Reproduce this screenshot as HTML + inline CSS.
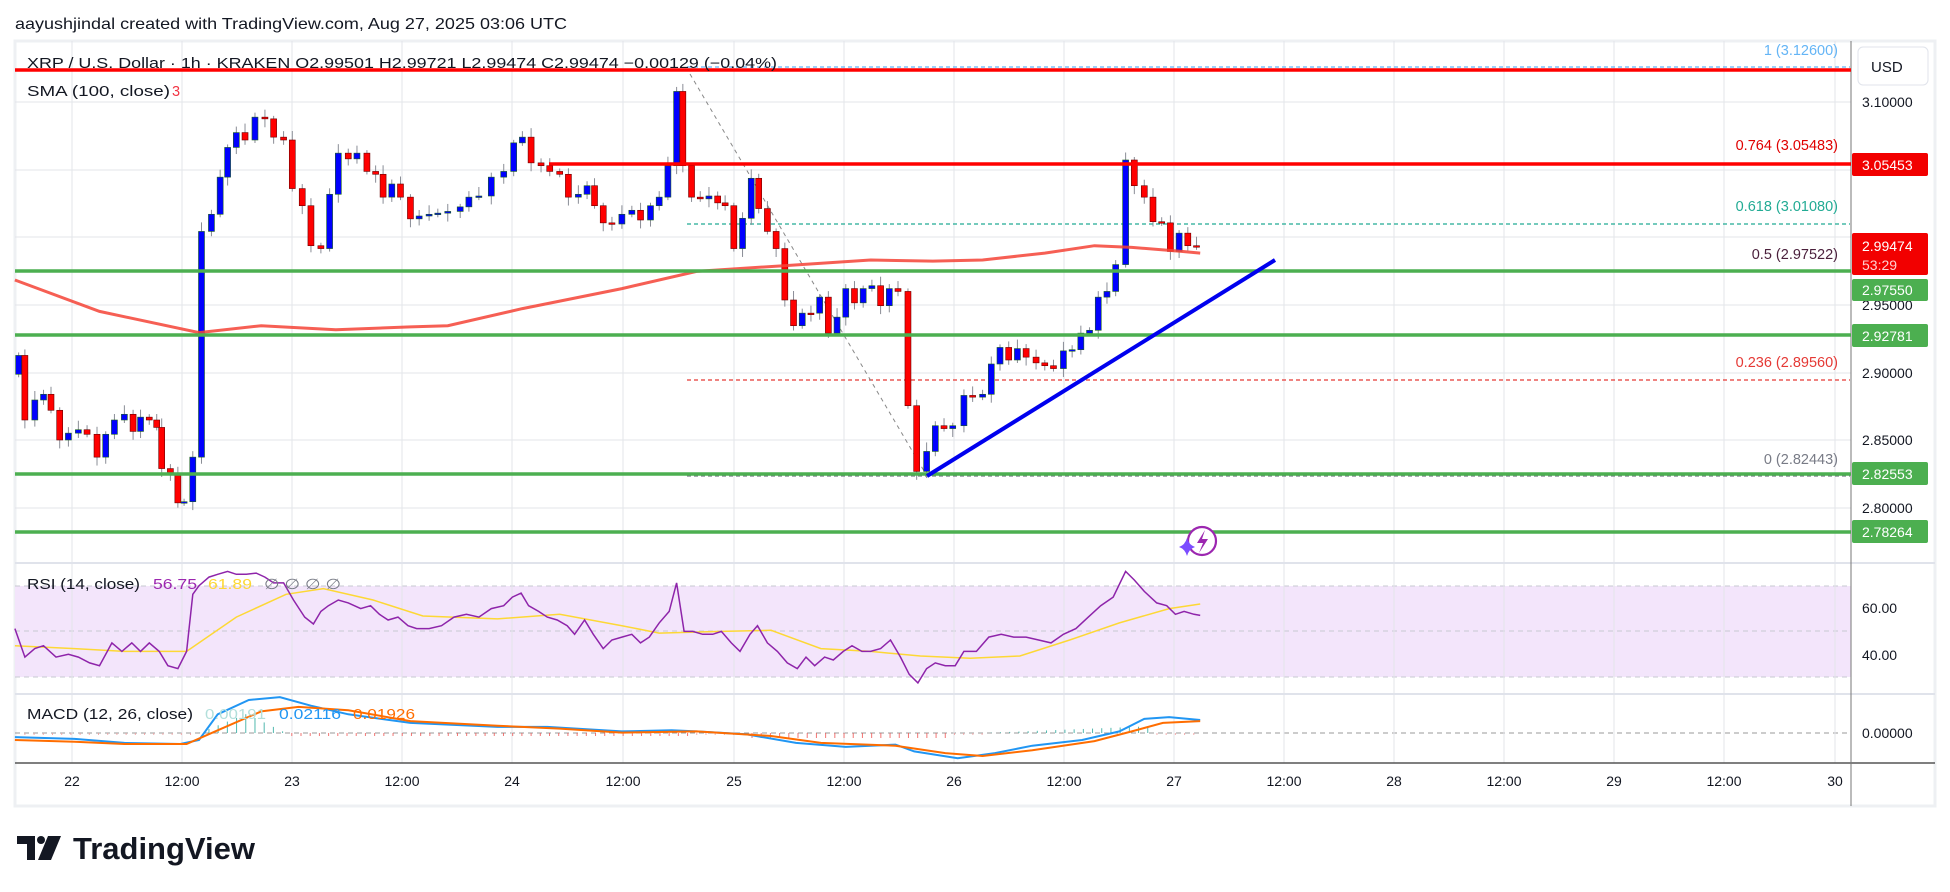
<!DOCTYPE html>
<html><head><meta charset="utf-8">
<style>
html,body{margin:0;padding:0;background:#fff;width:1950px;height:892px;overflow:hidden}
svg{display:block}
text{font-family:"Liberation Sans",sans-serif}
</style></head>
<body>
<svg id="s" width="1950" height="892" xmlns="http://www.w3.org/2000/svg">
<rect x="0" y="0" width="1950" height="892" fill="#fff"/>
<rect x="15" y="41" width="1920" height="765" fill="#fff" stroke="#eef0f3" stroke-width="3"/>
<g id="grid" stroke="#e3e5ea" stroke-width="1"></g>
<!-- RSI band -->
<rect x="15" y="586" width="1836" height="91" fill="#f3e5fb"/>
<g stroke="#c7c9d0" stroke-width="1" stroke-dasharray="5,4">
<line x1="15" y1="586" x2="1851" y2="586"/><line x1="15" y1="631" x2="1851" y2="631"/><line x1="15" y1="677" x2="1851" y2="677"/>
<line x1="15" y1="733" x2="1851" y2="733" stroke="#999"/>
</g>
<g id="vgrid" stroke="#e3e5ea" stroke-width="1"></g>
<!-- pane separators -->
<line x1="15" y1="563" x2="1935" y2="563" stroke="#e0e3eb" stroke-width="2"/>
<line x1="15" y1="694" x2="1935" y2="694" stroke="#e0e3eb" stroke-width="2"/>
<line x1="15" y1="763" x2="1935" y2="763" stroke="#555" stroke-width="1.5"/>
<line x1="1851" y1="41" x2="1851" y2="806" stroke="#777" stroke-width="1"/>
<!-- fib dashed -->
<g stroke-width="1.3" stroke-dasharray="4,3">
<line x1="687" y1="67" x2="1850" y2="67" stroke="#64b5f6"/>
<line x1="687" y1="224" x2="1850" y2="224" stroke="#22ab94"/>
<line x1="687" y1="380" x2="1850" y2="380" stroke="#e53935"/>
<line x1="687" y1="476" x2="1850" y2="476" stroke="#787b86"/>
</g>
<line x1="690" y1="74" x2="927" y2="476" stroke="#888" stroke-width="1" stroke-dasharray="4,4"/>
<g id="candles"></g>
<polyline id="sma" fill="none" stroke="#f44336" stroke-width="3" stroke-opacity="0.85"/>
<!-- levels -->
<line x1="15" y1="70" x2="1851" y2="70" stroke="#ff0000" stroke-width="3.5"/>
<line x1="549" y1="164" x2="1851" y2="164" stroke="#ff0000" stroke-width="3.5"/>
<g stroke="#4caf50" stroke-width="3.5">
<line x1="15" y1="271" x2="1851" y2="271"/><line x1="15" y1="335" x2="1851" y2="335"/>
<line x1="15" y1="474" x2="1851" y2="474"/><line x1="15" y1="532" x2="1851" y2="532"/>
</g>
<line x1="927" y1="476" x2="1275" y2="260" stroke="#0000ee" stroke-width="4"/>
<polyline id="rsima" fill="none" stroke="#fdd835" stroke-width="1.5"/>
<polyline id="rsi" fill="none" stroke="#8e24aa" stroke-width="1.5"/>
<g id="hist"></g>
<polyline id="macd" fill="none" stroke="#2196f3" stroke-width="2"/>
<polyline id="sig" fill="none" stroke="#ff6d00" stroke-width="2"/>
<!-- lightning icon -->
<circle cx="1202" cy="541" r="14" fill="#fff" stroke="#9c27b0" stroke-width="2.2"/>
<path d="M1205 530 L1197 543 H1203 L1199 553 L1208 539 H1202 Z" fill="#9c27b0"/>
<path d="M1187 538 Q1189 545 1195 547 Q1189 549 1187 556 Q1185 549 1179 547 Q1185 545 1187 538Z" fill="#7c4dff"/>
<!-- texts -->
<text x="15" y="29" font-size="16" fill="#131722" textLength="552" lengthAdjust="spacingAndGlyphs">aayushjindal created with TradingView.com, Aug 27, 2025 03:06 UTC</text>
<text x="27" y="68" font-size="14.5" fill="#131722" textLength="750" lengthAdjust="spacingAndGlyphs">XRP / U.S. Dollar · 1h · KRAKEN  O2.99501  H2.99721  L2.99474  C2.99474  −0.00129 (−0.04%)</text>
<text x="27" y="96" font-size="14.5" fill="#131722" textLength="143" lengthAdjust="spacingAndGlyphs">SMA (100, close)</text>
<text x="172" y="96" font-size="14.5" fill="#f23645">3</text>
<g font-size="14.5" text-anchor="end">
<text x="1838" y="55" fill="#64b5f6">1 (3.12600)</text>
<text x="1838" y="150" fill="#e00000">0.764 (3.05483)</text>
<text x="1838" y="211" fill="#22ab94">0.618 (3.01080)</text>
<text x="1838" y="259" fill="#4a1f3b">0.5 (2.97522)</text>
<text x="1838" y="367" fill="#e53935">0.236 (2.89560)</text>
<text x="1838" y="464" fill="#787b86">0 (2.82443)</text>
</g>
<rect x="1858" y="47" width="70" height="38" rx="5" fill="#fff" stroke="#e0e3eb"/>
<text x="1871" y="72" font-size="15" fill="#131722">USD</text>
<g font-size="14" fill="#131722">
<text x="1862" y="107">3.10000</text>
<text x="1862" y="310">2.95000</text>
<text x="1862" y="378">2.90000</text>
<text x="1862" y="445">2.85000</text>
<text x="1862" y="513">2.80000</text>
<text x="1862" y="613">60.00</text>
<text x="1862" y="660">40.00</text>
<text x="1862" y="738">0.00000</text>
</g>
<g font-size="14" fill="#fff">
<rect x="1852" y="153" width="76" height="23" rx="2" fill="#f20000"/><text x="1862" y="170">3.05453</text>
<rect x="1852" y="233" width="76" height="42" rx="2" fill="#f20000"/><text x="1862" y="251">2.99474</text><text x="1862" y="270" fill="#ffd0d0">53:29</text>
<rect x="1852" y="279" width="76" height="22" rx="2" fill="#4caf50"/><text x="1862" y="295">2.97550</text>
<rect x="1852" y="324" width="76" height="23" rx="2" fill="#4caf50"/><text x="1862" y="341">2.92781</text>
<rect x="1852" y="462" width="76" height="23" rx="2" fill="#4caf50"/><text x="1862" y="479">2.82553</text>
<rect x="1852" y="520" width="76" height="23" rx="2" fill="#4caf50"/><text x="1862" y="537">2.78264</text>
</g>
<text x="27" y="589" font-size="14.5" fill="#131722" textLength="113" lengthAdjust="spacingAndGlyphs">RSI (14, close)</text>
<text x="153" y="589" font-size="14.5" fill="#9c27b0" textLength="44" lengthAdjust="spacingAndGlyphs">56.75</text>
<text x="208" y="589" font-size="14.5" fill="#fdd835" textLength="44" lengthAdjust="spacingAndGlyphs">61.89</text>
<text x="264" y="589" font-size="14.5" fill="#787b86" textLength="77" lengthAdjust="spacingAndGlyphs">∅ ∅ ∅ ∅</text>
<text x="27" y="719" font-size="14.5" fill="#131722" textLength="166" lengthAdjust="spacingAndGlyphs">MACD (12, 26, close)</text>
<text x="205" y="719" font-size="14.5" fill="#b2dfdb" textLength="61" lengthAdjust="spacingAndGlyphs">0.00191</text>
<text x="279" y="719" font-size="14.5" fill="#2196f3" textLength="62" lengthAdjust="spacingAndGlyphs">0.02116</text>
<text x="353" y="719" font-size="14.5" fill="#ff6d00" textLength="62" lengthAdjust="spacingAndGlyphs">0.01926</text>
<g font-size="14" fill="#131722" text-anchor="middle">
<text x="72" y="786">22</text><text x="182" y="786">12:00</text><text x="292" y="786">23</text><text x="402" y="786">12:00</text>
<text x="512" y="786">24</text><text x="623" y="786">12:00</text><text x="734" y="786">25</text><text x="844" y="786">12:00</text>
<text x="954" y="786">26</text><text x="1064" y="786">12:00</text><text x="1174" y="786">27</text><text x="1284" y="786">12:00</text>
<text x="1394" y="786">28</text><text x="1504" y="786">12:00</text><text x="1614" y="786">29</text><text x="1724" y="786">12:00</text>
<text x="1835" y="786">30</text>
</g>
<!-- TradingView logo -->
<g fill="#131722">
<path d="M17 836 H35 V860 H27 V844 H17 Z"/>
<circle cx="41" cy="840" r="4"/>
<path d="M48 836 H61 L51 860 H38 Z"/>
</g>
<text x="73" y="859" font-size="31" font-weight="bold" fill="#131722" textLength="182" lengthAdjust="spacingAndGlyphs">TradingView</text>
</svg>
<script>
(function(){
var NS="http://www.w3.org/2000/svg";
function el(n,a,p){var e=document.createElementNS(NS,n);for(var k in a)e.setAttribute(k,a[k]);p.appendChild(e);return e;}
var X=function(x){return x/0.804;},Y=function(y){return y/1.75;};
var g=document.getElementById('grid'),vg=document.getElementById('vgrid');
[102,170,237,305,373,440,508,608,655].forEach(function(y){el('line',{x1:15,y1:y,x2:1851,y2:y},g);});
[72,182,292,402,512,623,734,844,954,1064,1174,1284,1394,1504,1614,1724,1835].forEach(function(x){el('line',{x1:x,y1:41,x2:x,y2:763},vg);});
var c=[[15,622],[20,735],[28,700],[35,690],[41,718],[48,770],[55,758],[63,752],[70,760],[78,800],[85,760],[92,735],[100,725],[107,755],[113,730],[120,735],[126,748],[130,820],[137,830],[143,880],[148,878],[155,800],[162,405],[170,375],[177,310],[183,258],[190,232],[197,245],[205,205],[213,208],[220,240],[228,245],[235,330],[243,360],[250,430],[258,435],[265,340],[272,268],[280,278],[287,268],[295,300],[302,305],[308,345],[315,322],[322,345],[330,383],[337,378],[345,375],[352,373],[360,370],[370,362],[377,345],[385,343],[395,310],[405,300],[413,250],[420,240],[427,285],[435,290],[442,300],[450,305],[457,345],[465,340],[472,325],[478,360],[485,390],[492,392],[500,375],[508,368],[515,385],[523,360],[530,345],[537,290],[544,160],[549,290],[556,345],[563,348],[570,343],[577,355],[583,360],[590,435],[597,382],[604,312],[610,365],[617,405],[624,435],[631,525],[638,570],[645,548],[652,548],[659,520],[666,583],[673,555],[680,505],[687,530],[694,505],[701,500],[708,535],[715,505],[722,510],[730,710],[737,825],[745,790],[752,745],[759,750],[766,745],[775,692],[782,695],[790,690],[797,637],[804,608],[811,630],[818,610],[825,625],[833,635],[840,640],[847,645],[855,614],[862,612],[869,583],[876,578],[883,520],[890,510],[897,463],[905,280],[912,325],[920,345],[927,388],[934,390],[941,440],[948,408],[955,430],[962,432]];
var cg=document.getElementById('candles'),o=655;
c.forEach(function(d,i){var x=X(d[0]),oc=Y(o),cc=Y(d[1]);var up=cc<oc;
var t=Math.min(oc,cc),b=Math.max(oc,cc);var w=3+((i*7)%5)*1.5,w2=3+((i*3)%4)*1.8;
el('line',{x1:x,y1:t-w,x2:x,y2:b+w2,stroke:'#8a8d96','stroke-width':1},cg);
el('rect',{x:x-3,y:t,width:6,height:Math.max(1.5,b-t),fill:up?'#0000ff':'#ff0000',stroke:up?'#1b5e20':'#6b0000','stroke-width':0.6},cg);o=d[1];});
function pl(id,pts){document.getElementById(id).setAttribute('points',pts.map(function(p){return X(p[0]).toFixed(1)+','+Y(p[1]).toFixed(1);}).join(' '));}
pl('sma',[[12,490],[80,545],[160,582],[210,570],[270,577],[330,572],[360,570],[420,540],[500,505],[560,475],[630,465],[700,455],[750,457],[790,455],[840,443],[880,430],[910,433],[950,440],[965,443]]);
pl('rsi',[[12,1100],[20,1150],[28,1135],[35,1130],[45,1150],[55,1145],[63,1150],[72,1160],[80,1165],[90,1125],[98,1140],[106,1125],[113,1140],[120,1125],[128,1140],[135,1165],[143,1170],[150,1140],[155,1040],[160,1025],[168,1010],[175,1005],[183,1000],[190,1005],[198,1005],[206,1003],[213,1010],[220,1020],[228,1020],[236,1050],[245,1080],[252,1092],[258,1070],[264,1060],[272,1050],[280,1055],[290,1065],[298,1060],[305,1075],[312,1085],[320,1080],[328,1095],[335,1100],[345,1100],[355,1095],[365,1080],[375,1075],[385,1080],[395,1065],[405,1060],[412,1045],[419,1038],[425,1060],[433,1070],[440,1080],[448,1085],[456,1095],[462,1110],[470,1085],[477,1110],[485,1135],[492,1120],[500,1115],[508,1110],[515,1125],[522,1115],[530,1090],[538,1070],[544,1020],[550,1105],[557,1105],[565,1110],[573,1110],[580,1105],[588,1125],[595,1140],[603,1110],[609,1095],[617,1125],[625,1140],[633,1160],[641,1170],[648,1150],[655,1165],[663,1150],[670,1155],[678,1140],[685,1130],[693,1140],[700,1140],[708,1135],[716,1120],[724,1150],[731,1180],[738,1195],[745,1170],[752,1160],[760,1165],[768,1165],[775,1140],[785,1140],[795,1115],[805,1110],[815,1115],[825,1115],[835,1120],[845,1125],[855,1110],[865,1100],[875,1080],[885,1060],[895,1045],[905,1000],[912,1015],[920,1035],[930,1055],[938,1060],[945,1075],[952,1070],[960,1075],[965,1077]]);
pl('rsima',[[12,1130],[60,1135],[100,1140],[150,1140],[190,1080],[230,1040],[260,1030],[300,1050],[340,1078],[400,1083],[450,1075],[500,1095],[530,1108],[580,1105],[620,1103],[660,1135],[700,1140],[740,1148],[780,1152],[820,1148],[860,1120],[900,1090],[940,1065],[965,1057]]);
pl('macd',[[12,1290],[60,1293],[100,1300],[145,1302],[160,1295],[175,1250],[200,1225],[225,1220],[250,1235],[280,1250],[330,1265],[400,1272],[440,1272],[500,1280],[540,1278],[560,1280],[600,1285],[640,1300],[680,1307],[720,1303],[735,1315],[770,1327],[800,1318],[830,1305],[870,1295],[900,1280],[920,1258],[940,1255],[965,1260]]);
pl('sig',[[12,1295],[60,1298],[100,1302],[150,1302],[175,1278],[210,1245],[240,1237],[280,1243],[330,1262],[400,1270],[450,1275],[500,1282],[560,1280],[620,1288],[660,1300],[720,1305],[760,1318],[790,1323],[830,1313],[880,1297],[910,1280],[935,1265],[965,1262]]);
var hg=document.getElementById('hist');
for(var x=20;x<965;x+=7.4){var h;var col;
if(x>160&&x<230){h=-(x<200?(x-160)*0.5:(230-x)*0.6);col='#26a69a';}
else if(x>790&&x<930){h=-((x-790)/20);col='#26a69a';}
else if(x>230&&x<560){h=3;col='#ef5350';}
else if(x>600&&x<760){h=5;col='#ef5350';}
else {h=2;col='#ef9a9a';}
el('line',{x1:X(x),y1:733,x2:X(x),y2:733+h,stroke:col,'stroke-width':1,'stroke-opacity':0.8},hg);}
})();
</script>
</body></html>
